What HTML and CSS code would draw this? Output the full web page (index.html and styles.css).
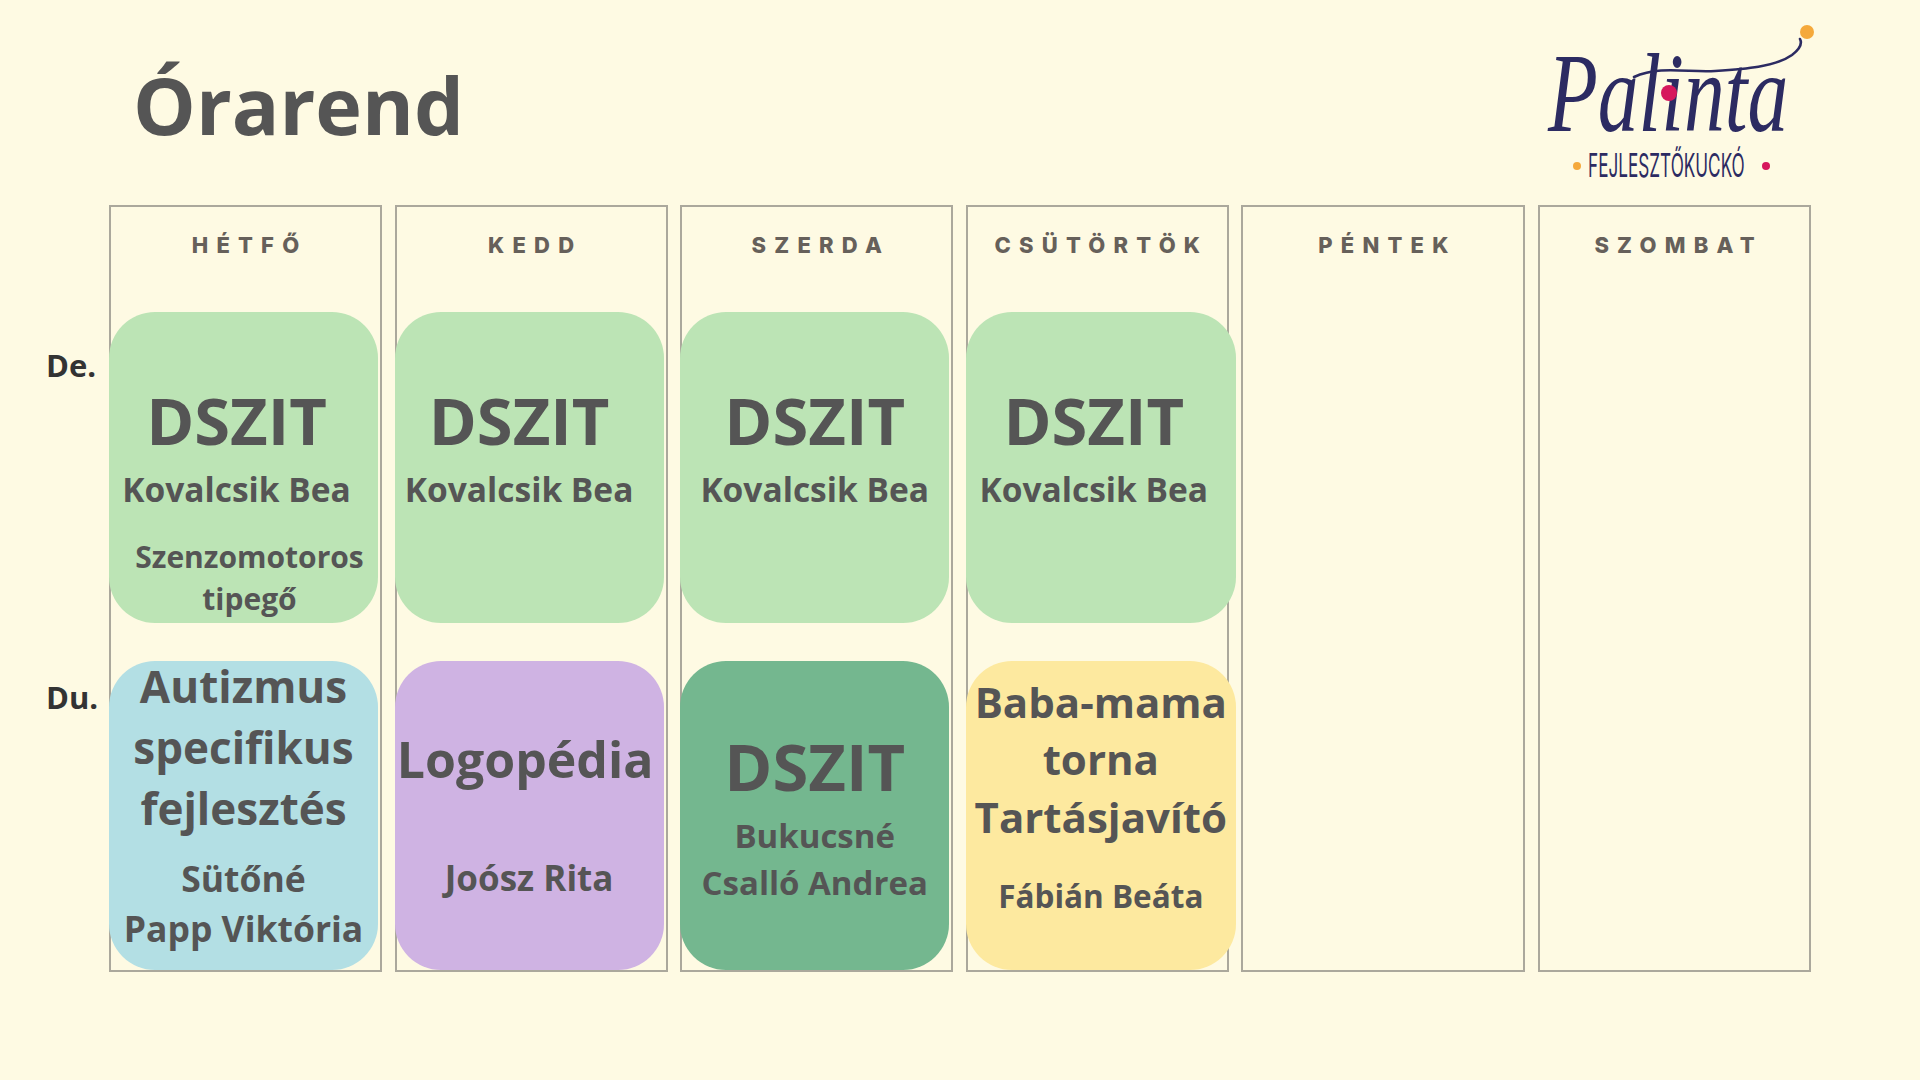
FILE: index.html
```html
<!DOCTYPE html>
<html lang="hu">
<head>
<meta charset="utf-8">
<title>Órarend – Palinta Fejlesztőkuckó</title>
<link rel="stylesheet" href="styles.css">
</head>
<body>
<header class="top">
  <h1 class="title">Órarend</h1>
  <svg class="logo" width="290" height="175" viewBox="0 0 290 175" xmlns="http://www.w3.org/2000/svg" aria-label="Palinta Fejlesztőkuckó">
    <path d="M104 62 C 130 50, 160 58, 185 56 C 215 54, 245 52, 262 40 C 270 34, 272 28, 270 24" fill="none" stroke="#2c2b62" stroke-width="2.6" stroke-linecap="round"/>
    <text class="logo-script" transform="translate(18 116) scale(0.73 1)" x="0" y="0" textLength="329" lengthAdjust="spacingAndGlyphs">Palinta</text>
    <circle cx="139" cy="78" r="8" fill="#d6175c"/>
    <circle cx="277" cy="17" r="7" fill="#f5a93b"/>
    <circle cx="47" cy="151" r="4" fill="#f5a93b"/>
    <text class="logo-sub" transform="translate(58 162) scale(0.55 1)" x="0" y="0" textLength="285" lengthAdjust="spacingAndGlyphs">FEJLESZTŐKUCKÓ</text>
    <circle cx="236" cy="151" r="4" fill="#d6175c"/>
  </svg>
</header>

<main class="board">
  <div class="labels">
    <div class="label label-de">De.</div>
    <div class="label label-du">Du.</div>
  </div>

  <div class="week">
    <section class="day">
      <h2 class="day-name">HÉTFŐ</h2>
      <div class="card am green shift">
        <div class="big">DSZIT</div>
        <div class="name">Kovalcsik Bea</div>
        <div class="sub">Szenzomotoros<br>tipegő</div>
      </div>
      <div class="card pm blue">
        <div class="topic">Autizmus<br>specifikus<br>fejlesztés</div>
        <div class="name name-tall">Sütőné<br>Papp Viktória</div>
      </div>
    </section>

    <section class="day">
      <h2 class="day-name">KEDD</h2>
      <div class="card am green shift-more">
        <div class="big">DSZIT</div>
        <div class="name">Kovalcsik Bea</div>
      </div>
      <div class="card pm purple">
        <div class="logo-topic">Logopédia</div>
        <div class="name name-far">Joósz Rita</div>
      </div>
    </section>

    <section class="day">
      <h2 class="day-name">SZERDA</h2>
      <div class="card am green">
        <div class="big">DSZIT</div>
        <div class="name">Kovalcsik Bea</div>
      </div>
      <div class="card pm dark">
        <div class="big big-pm">DSZIT</div>
        <div class="name name-mid">Bukucsné<br>Csalló Andrea</div>
      </div>
    </section>

    <section class="day day-narrow">
      <h2 class="day-name">CSÜTÖRTÖK</h2>
      <div class="card am green shift wide">
        <div class="big">DSZIT</div>
        <div class="name">Kovalcsik Bea</div>
      </div>
      <div class="card pm yellow wide">
        <div class="topic topic-yellow">Baba-mama<br>torna<br>Tartásjavító</div>
        <div class="name name-small">Fábián Beáta</div>
      </div>
    </section>

    <section class="day day-wide">
      <h2 class="day-name">PÉNTEK</h2>
    </section>

    <section class="day">
      <h2 class="day-name">SZOMBAT</h2>
    </section>
  </div>
</main>
</body>
</html>
```

FILE: styles.css
```css
* {
  box-sizing: border-box;
}

html, body {
  margin: 0;
  padding: 0;
}

body {
  width: 1920px;
  height: 1080px;
  background: #fefae3;
  font-family: "Open Sans", "Liberation Sans", sans-serif;
  color: #555555;
  overflow: hidden;
}

/* ---------- header ---------- */
.top {
  display: flex;
  align-items: flex-start;
  height: 205px;
  padding: 0 100px 0 133px;
}

.title {
  margin: 65px 0 0 0;
  font-size: 79px;
  line-height: 80px;
  font-weight: 700;
  color: #555555;
}

.logo {
  margin-left: auto;
  margin-top: 15px;
  display: block;
}

.logo-script {
  font-family: "Liberation Serif", "DejaVu Serif", serif;
  font-style: italic;
  font-size: 112px;
  fill: #2c2b62;
}

.logo-sub {
  font-family: "Inter", "DejaVu Sans", sans-serif;
  font-weight: 400;
  font-size: 33px;
  fill: #2c2b62;
}

/* ---------- board ---------- */
.board {
  display: flex;
  align-items: flex-start;
}

.labels {
  width: 109px;
  flex: none;
  display: flex;
  flex-direction: column;
  padding: 142px 0 0 46px;
}

.label {
  font-size: 31px;
  line-height: 36px;
  font-weight: 700;
  color: #333333;
}

.label-du {
  margin-top: 296px;
}

.week {
  display: grid;
  grid-template-columns: 273px 273px 273px 263px 284px 273px;
  column-gap: 12.6px;
}

.day {
  height: 767px;
  border: 2px solid #aba89c;
  display: flex;
  flex-direction: column;
  align-items: flex-start;
}

.day-name {
  align-self: stretch;
  margin: 0;
  padding-top: 23px;
  font-family: "Inter", "Lato", sans-serif;
  font-size: 22px;
  line-height: 30px;
  font-weight: 800;
  letter-spacing: 8.2px;
  text-indent: 8.2px;
  text-align: center;
  color: #66605a;
}

/* ---------- cards ---------- */
.card {
  flex: none;
  width: 269px;
  margin-left: -2px;
  border-radius: 46px;
  display: flex;
  flex-direction: column;
  align-items: center;
  text-align: center;
  white-space: nowrap;
  font-weight: 700;
  color: #555555;
}

.card.wide {
  width: 270px;
}

.am {
  height: 311px;
  margin-top: 52px;
  padding-top: 75px;
}

.pm {
  height: 309px;
  margin-top: 38px;
}

.green { background: #bce4b5; }
.blue { background: #b3dfe4; }
.purple { background: #cfb3e3; }
.dark { background: #74b78f; }
.yellow { background: #fde99f; }

.big {
  font-size: 65px;
  line-height: 66px;
}

.name {
  font-size: 33.5px;
  line-height: 40px;
  margin-top: 16px;
}

.shift .big,
.shift .name {
  padding-right: 14px;
}

.shift-more .big,
.shift-more .name {
  padding-right: 20px;
}

.sub {
  font-size: 30px;
  line-height: 42px;
  margin-top: 27px;
  padding-left: 12px;
}

.topic {
  font-size: 44px;
  line-height: 61px;
  margin-top: -5px;
}

.name-tall {
  font-size: 35.5px;
  line-height: 50px;
  margin-top: 14px;
}

.logo-topic {
  font-size: 50px;
  line-height: 60px;
  margin-top: 68px;
  padding-right: 8px;
}

.name-far {
  font-size: 35px;
  margin-top: 69px;
}

.big-pm {
  margin-top: 72px;
}

.name-mid {
  font-size: 33px;
  line-height: 47px;
  margin-top: 13px;
}

.topic-yellow {
  font-size: 42px;
  line-height: 57.5px;
  margin-top: 11.5px;
}

.name-small {
  font-size: 31.5px;
  margin-top: 31px;
}
```
